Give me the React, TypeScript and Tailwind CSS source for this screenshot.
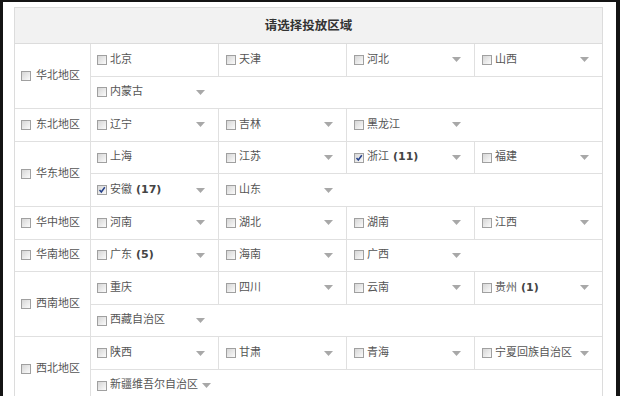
type Prov = { n: string; a?: boolean; c?: number; on?: boolean };
type Region = { name: string; rows: Prov[][] };

const regions: Region[] = [
  {
    name: "华北地区",
    rows: [
      [{ n: "北京" }, { n: "天津" }, { n: "河北", a: true }, { n: "山西", a: true }],
      [{ n: "内蒙古", a: true }],
    ],
  },
  {
    name: "东北地区",
    rows: [[{ n: "辽宁", a: true }, { n: "吉林", a: true }, { n: "黑龙江", a: true }]],
  },
  {
    name: "华东地区",
    rows: [
      [
        { n: "上海" },
        { n: "江苏", a: true },
        { n: "浙江", a: true, c: 11, on: true },
        { n: "福建", a: true },
      ],
      [{ n: "安徽", a: true, c: 17, on: true }, { n: "山东", a: true }],
    ],
  },
  {
    name: "华中地区",
    rows: [[{ n: "河南", a: true }, { n: "湖北", a: true }, { n: "湖南", a: true }, { n: "江西", a: true }]],
  },
  {
    name: "华南地区",
    rows: [[{ n: "广东", a: true, c: 5 }, { n: "海南", a: true }, { n: "广西", a: true }]],
  },
  {
    name: "西南地区",
    rows: [
      [{ n: "重庆" }, { n: "四川", a: true }, { n: "云南", a: true }, { n: "贵州", a: true, c: 1 }],
      [{ n: "西藏自治区", a: true }],
    ],
  },
  {
    name: "西北地区",
    rows: [
      [{ n: "陕西", a: true }, { n: "甘肃", a: true }, { n: "青海", a: true }, { n: "宁夏回族自治区", a: true }],
      [{ n: "新疆维吾尔自治区", a: true }],
    ],
  },
];

function Box({ on }: { on?: boolean }) {
  return (
    <span className="relative inline-block h-[10px] w-[10px] shrink-0 border border-[#a0a0a0] bg-linear-to-br from-[#d6d6d6] to-[#fbfbfb]">
      {on && (
        <svg viewBox="0 0 8 8" className="absolute left-0 top-0 h-[8px] w-[8px]">
          <path d="M1.5 4 L3.3 6 L6.8 1.3" fill="none" stroke="#25418a" strokeWidth="1.5" />
        </svg>
      )}
    </span>
  );
}

function Arrow() {
  return (
    <span className="ml-auto flex shrink-0 pl-[4px]">
      <svg viewBox="0 0 9 5" className="h-[5px] w-[9px]">
        <path d="M0 0 L9 0 L4.5 5 Z" fill="#a8a8a8" />
      </svg>
    </span>
  );
}

function App() {
  return (
    <div
      className="flex h-[396px] w-[620px] overflow-hidden bg-[#141414]"
      style={{ fontFamily: '"DejaVu Sans", "Noto Sans CJK SC", sans-serif' }}
    >
      <div className="ml-[3px] mr-[4px] mt-[2px] flex-1 bg-white pl-[11px] pt-[5px]">
        <div className="w-[589px] border border-[#dcdcdc]">
          {/* Header */}
          <div className="flex h-[36px] items-center justify-center border-b border-[#dcdcdc] bg-[#f2f2f2] pt-[2px] text-[12.5px] font-bold text-[#333]">
            请选择投放区域
          </div>

          {regions.map((r, ri) => (
            <div key={r.name} className={`flex ${ri > 0 ? "border-t border-[#e0e0e0]" : ""}`}>
              <div className="flex w-[76px] shrink-0 items-center border-r border-[#e0e0e0] pl-[6px] text-[11px] text-[#555]">
                <Box />
                <span className="ml-[5px]">{r.name}</span>
              </div>
              <div className="w-[511px]">
                {r.rows.map((row, si) => (
                  <div
                    key={si}
                    className={`grid grid-cols-[127px_128px_128px_128px] ${si > 0 ? "h-[32.6px] border-t border-[#e0e0e0]" : "h-[31.6px]"}`}
                  >
                    {row.map((p, pi) => (
                      <div
                        key={p.n}
                        className={`flex items-center pr-[13px] text-[11px] text-[#555] ${pi > 0 ? "border-l border-[#e0e0e0] pl-[7px]" : "pl-[6px]"}`}
                      >
                        <Box on={p.on} />
                        <span className="ml-[3px] whitespace-nowrap">
                          {p.n}
                          {p.c !== undefined && (
                            <span className="ml-[4px] text-[11px] font-bold text-[#444]">({p.c})</span>
                          )}
                        </span>
                        {p.a && <Arrow />}
                      </div>
                    ))}
                  </div>
                ))}
              </div>
            </div>
          ))}
        </div>
      </div>
    </div>
  );
}

export default App;
